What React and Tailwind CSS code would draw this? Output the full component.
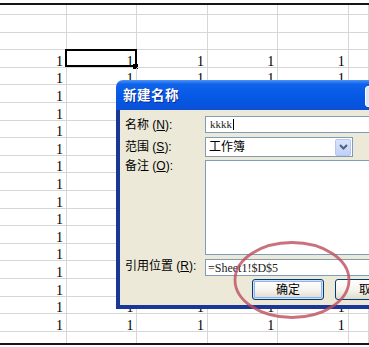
import React from 'react';

const ROWS = 20;
const COLS = 6;

const ui = "font-['Liberation_Sans','Noto_Sans_CJK_SC',sans-serif]";
const serif = "font-['Liberation_Serif','Noto_Sans_CJK_SC',serif]";

const Label = ({ text, accel, className = '' }) => (
    <span className={`w-[80px] shrink-0 text-[12px] leading-[14px] text-black ${className}`}>
        {text} (<u>{accel}</u>):
    </span>
);

const Sheet = () => {
    const cells = [];
    for (let r = 0; r < ROWS; r++) {
        for (let c = 0; c < COLS; c++) {
            // rows 5..16 of columns 1..4 sit fully behind the dialog
            const hidden = r >= 5 && r <= 16 && c >= 1;
            const hasValue = r >= 3 && r <= 18 && c <= 4 && !hidden;
            const selected = r === 3 && c === 1;
            cells.push(
                <div
                    key={`${r}-${c}`}
                    className={`relative flex items-end justify-end border-r border-b border-[#d6d6d6] pr-[3px] text-[14px] leading-[10px] text-black ${serif}`}
                >
                    {hasValue && '1'}
                    {selected && (
                        <>
                            <div className="absolute -left-[2px] -top-[1.5px] -right-[1px] -bottom-[0.5px] border-[2.5px] border-black" />
                            <div className="absolute -right-[1.5px] -bottom-[2.5px] h-[5px] w-[5px] bg-black" />
                        </>
                    )}
                </div>
            );
        }
    }
    return (
        <div className="h-[342px] overflow-hidden border-y-2 border-[#151515]">
            <div className="grid grid-cols-[67px_repeat(4,70.45px)_1fr] grid-rows-[10px_repeat(19,17.6px)]">
                {cells}
            </div>
        </div>
    );
};

const XpButton = ({ children, primary }) => (
    <div
        className={`flex h-[21px] w-[72px] shrink-0 items-center justify-center rounded-[3px] border border-[#003c74] bg-[linear-gradient(180deg,#ffffff_0%,#f4f3ee_55%,#dedacb_100%)] text-[12px] text-black ${primary ? 'shadow-[inset_0_0_0_1px_#cfe0fa,inset_0_0_0_2px_#93b3e8]' : ''}`}
    >
        {children}
    </div>
);

const NameDialog = () => (
    <div className={`absolute left-[116px] top-[80px] z-20 w-[298px] ${ui}`}>
        {/* Title bar */}
        <div className="flex h-[30px] items-center rounded-t-[7px] bg-[linear-gradient(180deg,#4a93f7_0%,#0f62ea_14%,#0558e4_60%,#0a50d6_100%)] pl-[7px] pr-[5px] pt-[3px]">
            <span className="text-[13.5px] font-bold tracking-[0.5px] text-white [text-shadow:1px_1px_0_#0b2c9a]">新建名称</span>
            <div className="ml-auto flex gap-[2px]">
                <div className="h-[21px] w-[21px] rounded-[3px] border border-white bg-[#dbe6f8]" />
                <div className="h-[21px] w-[21px] rounded-[3px] border border-white bg-[#e2552f]" />
            </div>
        </div>

        {/* Body */}
        <div className="flex flex-col border-x-4 border-b-4 border-[#1a3796] bg-[#ece9d8] pb-[5px] pl-[5px] pt-[6px]">
            <div className="flex h-[17px] items-center">
                <Label text="名称" accel="N" />
                <div className="mr-[8px] flex h-full flex-1 items-center border border-[#7f9db9] bg-white pl-[4px]">
                    <span className={`text-[11px] leading-none text-[#222] ${serif}`}>kkkk</span>
                    <span className="ml-[1px] h-[11px] w-px bg-black" />
                </div>
            </div>

            <div className="mt-[4px] flex h-[20px] items-center">
                <Label text="范围" accel="S" />
                <div className="flex h-full w-[148px] items-center border border-[#7f9db9] bg-white pl-[3px] pr-[1px]">
                    <span className="text-[12px] leading-none text-black">工作簿</span>
                    <div className="ml-auto flex h-[17px] w-[16px] items-center justify-center rounded-[2px] border border-[#b3c7f3] bg-[linear-gradient(180deg,#d9e4fc_0%,#bfd1f8_100%)]">
                        <svg width="9" height="6" viewBox="0 0 9 6">
                            <polyline points="1,1 4.5,4.5 8,1" fill="none" stroke="#4d6185" strokeWidth="2" />
                        </svg>
                    </div>
                </div>
            </div>

            <div className="mt-[3px] flex h-[95px] items-start">
                <Label text="备注" accel="O" className="mt-[-1px]" />
                <div className="mr-[8px] h-full flex-1 border border-[#7f9db9] bg-white" />
            </div>

            <div className="mt-[4px] flex h-[17px] items-center">
                <Label text="引用位置" accel="R" className="mt-[-3px]" />
                <div className="mr-[8px] flex h-full flex-1 items-center border border-[#7f9db9] bg-white pl-[2px]">
                    <span className={`text-[12px] leading-none text-[#222] ${serif}`}>=Sheet1!$D$5</span>
                </div>
            </div>

            <div className="mt-[3px] flex gap-[11px] pl-[127px]">
                <XpButton primary>确定</XpButton>
                <XpButton>取消</XpButton>
            </div>
        </div>
    </div>
);

const App = () => (
    <div className="relative h-[347px] w-[369px] overflow-hidden bg-white pt-[3px]">
        <Sheet />
        <NameDialog />
        {/* red marker circle */}
        <svg className="pointer-events-none absolute left-0 top-0 z-30" width="369" height="347">
            <ellipse cx="292" cy="280" rx="57" ry="37.5" fill="none" stroke="#bd4d5d" strokeOpacity="0.8" strokeWidth="2.8" />
        </svg>
    </div>
);

export default App;
